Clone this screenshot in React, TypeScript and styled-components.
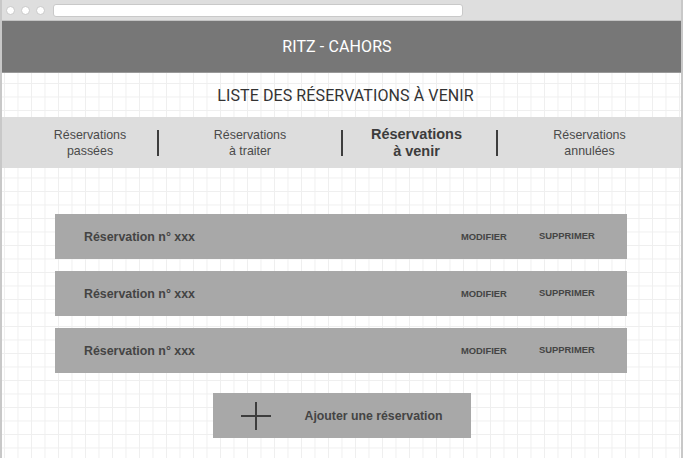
import React from 'react';
import styled, { createGlobalStyle } from 'styled-components';

const GlobalStyle = createGlobalStyle`
  html, body {
    margin: 0;
    padding: 0;
    background: #fff;
  }
  body {
    font-family: "Liberation Sans", Arial, sans-serif;
  }
`;

const Window = styled.div`
  width: 683px;
  height: 458px;
  box-sizing: border-box;
  border-left: 2px solid #c8c8c8;
  border-right: 2px solid #c8c8c8;
  display: flex;
  flex-direction: column;
  overflow: hidden;
  background-color: #fff;
  background-image:
    linear-gradient(to right, #efefef 1px, transparent 1px),
    linear-gradient(to bottom, #efefef 1px, transparent 1px);
  background-size: 13.5px 13.5px;
  background-position: 2px 2px;
`;

const Chrome = styled.div`
  height: 21px;
  flex-shrink: 0;
  background: #dedede;
  border-bottom: 1px solid #c4c4c4;
  box-sizing: border-box;
  display: flex;
  align-items: center;
  padding-left: 6px;
  gap: 6px;
  margin: 0 -2px;
`;

const Dot = styled.span`
  width: 9px;
  height: 9px;
  border-radius: 50%;
  background: #fff;
  border: 1px solid #c9c9c9;
  box-sizing: border-box;
`;

const UrlBar = styled.div`
  width: 410px;
  height: 13px;
  margin-left: 2px;
  background: #fff;
  border: 1px solid #c9c9c9;
  border-radius: 3px;
  box-sizing: border-box;
`;

const Header = styled.header`
  height: 52px;
  flex-shrink: 0;
  background: #777;
  border-bottom: 1px solid #999;
  box-sizing: border-box;
  display: flex;
  align-items: center;
  justify-content: center;
  padding-right: 9px;
  color: #fff;
  font-family: Roboto, "Liberation Sans", sans-serif;
  font-size: 16px;
  letter-spacing: 0.1px;
`;

const Title = styled.h1`
  margin: 0;
  height: 44px;
  display: flex;
  align-items: center;
  justify-content: center;
  padding-left: 8px;
  font-family: Roboto, "Liberation Sans", sans-serif;
  font-weight: 400;
  font-size: 16px;
  letter-spacing: 0.1px;
  color: #333;
`;

const Tabs = styled.nav`
  height: 51px;
  flex-shrink: 0;
  background: #dddddd;
  display: grid;
  grid-template-columns: 155px 2px 182px 2px 153px 2px 1fr;
  align-items: center;
`;

const Tab = styled.div<{ $active?: boolean; $shift?: number }>`
  text-align: center;
  padding-left: ${(p) => Math.max(p.$shift ?? 0, 0)}px;
  padding-right: ${(p) => Math.max(-(p.$shift ?? 0), 0)}px;
  color: ${(p) => (p.$active ? '#3c3c3c' : '#4a4a4a')};
  font-size: ${(p) => (p.$active ? '14.5px' : '12.4px')};
  font-weight: ${(p) => (p.$active ? 700 : 400)};
  line-height: ${(p) => (p.$active ? '17px' : '16px')};
`;

const Divider = styled.span`
  width: 2px;
  height: 26px;
  background: #3d3d3d;
`;

const List = styled.div`
  display: flex;
  flex-direction: column;
  gap: 12px;
  padding: 46px 54px 0 53px;
`;

const Row = styled.div`
  height: 45px;
  background: #a8a8a8;
  display: flex;
  align-items: center;
  padding-left: 29px;
`;

const RowLabel = styled.span`
  flex: 1;
  font-weight: 700;
  font-size: 12.4px;
  color: #444;
`;

const Action = styled.span<{ $width: number; $raise?: boolean }>`
  width: ${(p) => p.$width}px;
  font-weight: 700;
  font-size: 9.4px;
  color: #444;
  margin-top: ${(p) => (p.$raise ? '-2px' : '0')};
`;

const AddWrap = styled.div`
  display: flex;
  justify-content: center;
  padding: 20px 0 0 0;
`;

const AddButton = styled.button`
  width: 258px;
  height: 45px;
  border: none;
  background: #a8a8a8;
  display: flex;
  align-items: center;
  padding: 0 0 0 28px;
  gap: 34px;
  font-family: "Liberation Sans", Arial, sans-serif;
  font-weight: 700;
  font-size: 12.3px;
  color: #444;
  cursor: pointer;
`;

const reservations = [1, 2, 3];

export default function App() {
  return (
    <>
      <GlobalStyle />
      <Window>
        <Chrome>
          <Dot />
          <Dot />
          <Dot />
          <UrlBar />
        </Chrome>
        <Header>RITZ - CAHORS</Header>
        <Title>LISTE DES RÉSERVATIONS À VENIR</Title>
        <Tabs>
          <Tab $shift={21}>Réservations<br />passées</Tab>
          <Divider />
          <Tab>Réservations<br />à traiter</Tab>
          <Divider />
          <Tab $active $shift={-6}>Réservations<br />à venir</Tab>
          <Divider />
          <Tab>Réservations<br />annulées</Tab>
        </Tabs>
        <List>
          {reservations.map((r) => (
            <Row key={r}>
              <RowLabel>Réservation n° xxx</RowLabel>
              <Action $width={78}>MODIFIER</Action>
              <Action $width={88} $raise>SUPPRIMER</Action>
            </Row>
          ))}
        </List>
        <AddWrap>
          <AddButton>
            <svg width="30" height="28" viewBox="0 0 30 28">
              <path d="M0 14H30M15 0V28" stroke="#3d3d3d" strokeWidth="2" />
            </svg>
            Ajouter une réservation
          </AddButton>
        </AddWrap>
      </Window>
    </>
  );
}
